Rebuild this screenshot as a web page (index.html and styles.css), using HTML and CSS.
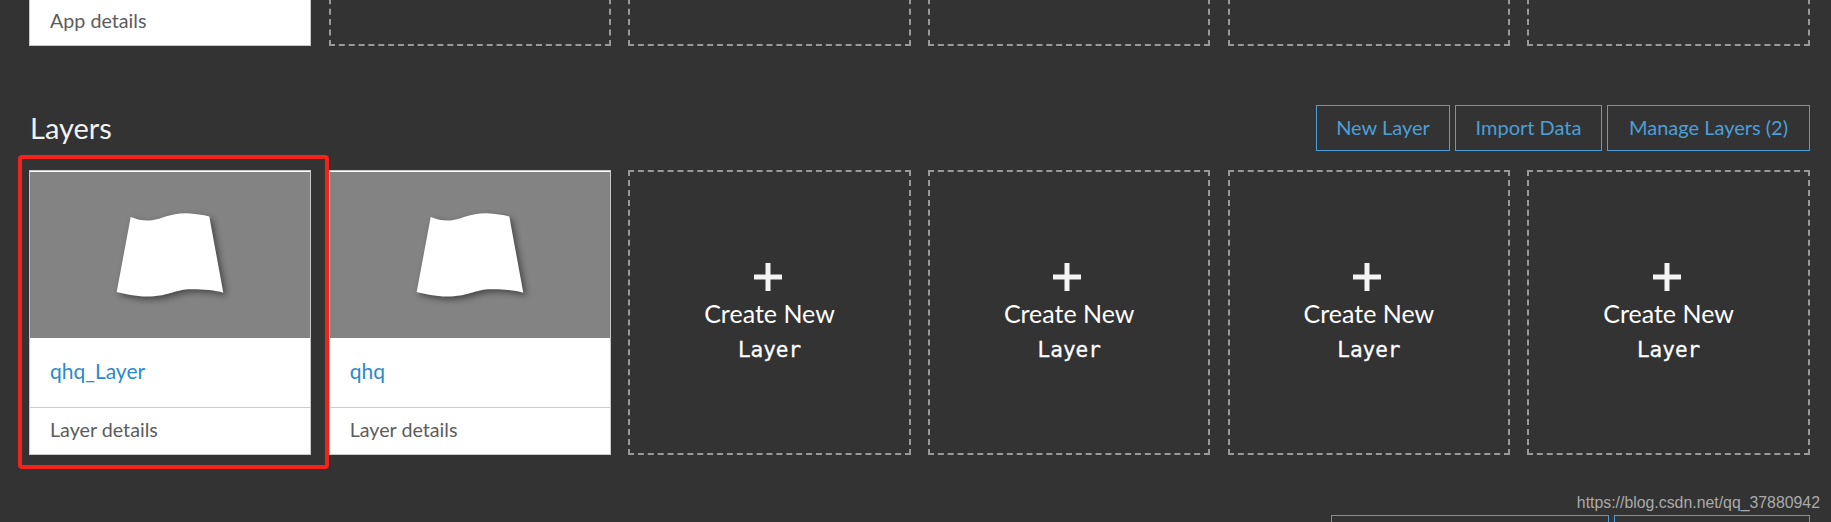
FILE: index.html
```html
<!DOCTYPE html>
<html lang="en">
<head>
  <meta charset="UTF-8">
  <title>Layers</title>
  <link rel="stylesheet" href="styles.css">
</head>
<body>
  <!-- Apps row, scrolled mostly out of view -->
  <div class="card-grid top-row">
    <div class="card">
      <div class="card-details">App details</div>
    </div>
    <div class="create-card"></div>
    <div class="create-card"></div>
    <div class="create-card"></div>
    <div class="create-card"></div>
    <div class="create-card"></div>
  </div>

  <div class="section-header">
    <h2>Layers</h2>
    <div class="actions">
      <a class="btn btn-new">New Layer</a>
      <a class="btn btn-import">Import Data</a>
      <a class="btn btn-manage">Manage Layers (2)</a>
    </div>
  </div>

  <div class="card-grid">
    <div class="card">
      <div class="thumb">
        <svg class="map-icon" viewBox="26 22 108 84"><path d="M40.7 26C48 29 55 30 62 29.3C72 28 80 22 97 22.3C105 22.6 113 24 119.3 25.5L133.3 101.7C125 99 110 98 98 98.3C85 99 78 105.5 57 105.5C45 105.5 35 103 26.7 101Z"/></svg>
      </div>
      <div class="card-title"><a>qhq_Layer</a></div>
      <div class="card-details">Layer details</div>
      <div class="highlight"></div>
    </div>
    <div class="card">
      <div class="thumb">
        <svg class="map-icon" viewBox="26 22 108 84"><path d="M40.7 26C48 29 55 30 62 29.3C72 28 80 22 97 22.3C105 22.6 113 24 119.3 25.5L133.3 101.7C125 99 110 98 98 98.3C85 99 78 105.5 57 105.5C45 105.5 35 103 26.7 101Z"/></svg>
      </div>
      <div class="card-title"><a>qhq</a></div>
      <div class="card-details">Layer details</div>
    </div>
    <div class="create-card">
      <svg class="plus" viewBox="0 0 28 28"><path d="M11.5 0h5v11.5H28v5H16.500V28h-5V16.500H0v-5h11.500z"/></svg>
      <span class="create-line">Create New</span>
      <span class="create-type">Layer</span>
    </div>
    <div class="create-card">
      <svg class="plus" viewBox="0 0 28 28"><path d="M11.5 0h5v11.5H28v5H16.500V28h-5V16.500H0v-5h11.500z"/></svg>
      <span class="create-line">Create New</span>
      <span class="create-type">Layer</span>
    </div>
    <div class="create-card">
      <svg class="plus" viewBox="0 0 28 28"><path d="M11.5 0h5v11.5H28v5H16.500V28h-5V16.500H0v-5h11.500z"/></svg>
      <span class="create-line">Create New</span>
      <span class="create-type">Layer</span>
    </div>
    <div class="create-card">
      <svg class="plus" viewBox="0 0 28 28"><path d="M11.5 0h5v11.5H28v5H16.500V28h-5V16.500H0v-5h11.500z"/></svg>
      <span class="create-line">Create New</span>
      <span class="create-type">Layer</span>
    </div>
  </div>

  <!-- Next section's buttons, cut off by the window -->
  <div class="actions next-actions">
    <a class="btn btn-next-a"></a>
    <a class="btn btn-next-b"></a>
  </div>

  <div class="watermark">https://blog.csdn.net/qq_37880942</div>
</body>
</html>
```

FILE: styles.css
```css
html, body {
  height: 522px;
  overflow: hidden;
}

body {
  margin: 0;
  padding: 0 21px 0 29px;
  box-sizing: border-box;
  position: relative;
  background: #333;
  font-family: Lato, sans-serif;
}

.card-grid {
  display: grid;
  grid-template-columns: repeat(6, 282.3px);
  column-gap: 17.4px;
  height: 285px;
}

.top-row {
  height: 46px;
  grid-template-rows: 46px;
  overflow: hidden;
  align-items: end;
}

.top-row .card,
.top-row .create-card {
  height: 100px;
}

.card {
  position: relative;
  display: flex;
  flex-direction: column;
  justify-content: flex-end;
  box-sizing: border-box;
  background: #fff;
  border: 1px solid #c8c8c8;
}

.thumb {
  height: 166px;
  box-sizing: border-box;
  background: #838383;
  display: flex;
  align-items: center;
  justify-content: center;
}

.map-icon {
  width: 108px;
  height: 84px;
  overflow: visible;
  fill: #fff;
  filter: drop-shadow(3px 3px 3px rgba(0, 0, 0, 0.45));
}

.card-title {
  height: 70px;
  padding: 0 0 4px 20px;
  display: flex;
  align-items: center;
  font-size: 21px;
  color: #2a8acb;
  border-bottom: 1px solid #ccc;
  box-sizing: border-box;
}

.card-details {
  height: 46px;
  padding: 0 0 3px 20px;
  box-sizing: border-box;
  display: flex;
  align-items: center;
  font-size: 19.7px;
  color: #5c5c5c;
}

.highlight {
  position: absolute;
  top: -16px;
  left: -12px;
  right: -19px;
  bottom: -15px;
  border: 4px solid #f5211a;
  border-radius: 4px;
}

.create-card {
  display: flex;
  flex-direction: column;
  align-items: center;
  box-sizing: border-box;
  padding-top: 91px;
  border: 2px dashed #999;
  color: #fff;
}

.plus {
  width: 28px;
  height: 28px;
  margin-left: -4px;
  fill: #f4f4f4;
}

.create-line {
  margin-top: 5px;
  font-size: 25px;
  line-height: 34px;
}

.create-type {
  margin-top: 1px;
  font-family: "DejaVu Sans Mono", monospace;
  font-size: 21px;
  line-height: 38px;
  -webkit-text-stroke: 0.3px #fff;
}

.section-header {
  display: flex;
  justify-content: space-between;
  align-items: flex-start;
  margin-top: 59px;
  height: 65px;
}

.section-header h2 {
  margin: 6px 0 0 1px;
  font-size: 29px;
  line-height: 34px;
  font-weight: 400;
  color: #f2f2f2;
}

.actions {
  display: flex;
  gap: 5px;
}

.btn {
  display: flex;
  flex: none;
  align-items: center;
  justify-content: center;
  box-sizing: border-box;
  height: 46px;
  padding-bottom: 2px;
  border: 1px solid #4c9fd8;
  color: #4c9fd8;
  font-size: 20px;
}

.btn-new { width: 134px; }
.btn-import { width: 147px; }
.btn-manage { width: 203px; }
.btn-next-a { width: 278px; }
.btn-next-b { width: 196px; }

.next-actions {
  justify-content: flex-end;
  margin-top: 60px;
  height: 8px;
  overflow: hidden;
}

.watermark {
  position: absolute;
  right: 11px;
  top: 493px;
  font-family: "Liberation Sans", sans-serif;
  font-size: 15.85px;
  line-height: 20px;
  color: #aaa;
}
```
